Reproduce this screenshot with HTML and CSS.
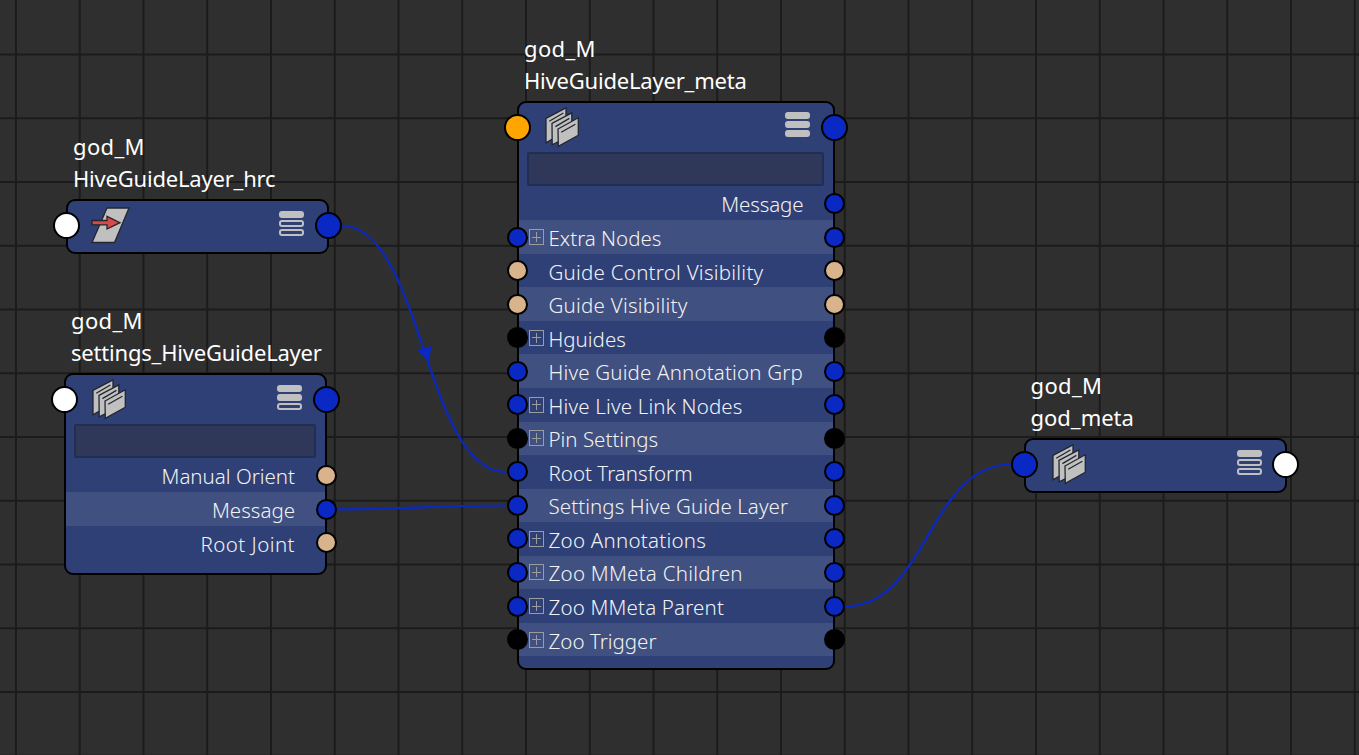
FILE: index.html
```html
<!DOCTYPE html>
<html lang="en">
<head>
<meta charset="utf-8">
<title>Node Editor</title>
<link rel="stylesheet" href="styles.css">
</head>
<body>
<svg class="defs" width="0" height="0" aria-hidden="true">
  <symbol id="stack" viewBox="0 0 35 41">
    <g fill="#c0c0c0" stroke="#23262d" stroke-width="1.3">
      <path d="M1 11.3 21 .9V24L1 35.8Z"/><path d="M4.2 14.2 18.4 6"/>
      <path d="M7 16.4 26.8 5.9V28L7.2 37.8Z"/><path d="M10.4 19.6 24.4 11.4"/>
      <path d="M13 22 33.3 10.8V28.2L13.3 39.4Z"/><path d="M16.2 25.3 30.4 17.2"/>
    </g>
  </symbol>
  <symbol id="transform" viewBox="0 0 40 37">
    <path d="M16 1H38L23.500 35.500H1Z" fill="#c0c0c0" stroke="#23262d" stroke-width="1.3"/>
    <path d="M1 13.500H16V9.300L29 15.700 16 22V17.800H1Z" fill="#d8494a" stroke="#23262d" stroke-width="1.3"/>
  </symbol>
</svg>
<main class="canvas">
  <svg class="wires" width="1359" height="755">
    <defs>
      <pattern id="grid" x="15" y="53.500" width="63.750" height="63.750" patternUnits="userSpaceOnUse">
        <path d="M1 0V63.750M0 1H63.750" stroke="#1b1b1b" stroke-width="2"/>
      </pattern>
    </defs>
    <rect width="1359" height="755" fill="url(#grid)"/>
    <g fill="none" stroke="#0a28c3" stroke-width="2.2">
      <path d="M341 225.500C423 225.500 424 472 506 472"/>
      <path d="M336 509.300C421 509.300 421 505.500 506 505.500"/>
      <path d="M845 606.300C928 606.300 928 464.500 1011 464.500"/>
    </g>
    <path d="M417.500 350.300 431.500 346 429 361.700Z" fill="#0a28c3"/>
  </svg>

  <section class="node hrc">
    <h2 class="title"><span class="ns">god_M</span><span class="name">HiveGuideLayer_hrc</span></h2>
    <div class="box">
      <header class="head">
        <i class="port big white in"></i>
        <svg class="icon-transform"><use href="#transform"/></svg>
        <div class="bars"><b class="full"></b><b></b><b></b></div>
        <i class="port big blue out"></i>
      </header>
    </div>
  </section>

  <section class="node settings">
    <h2 class="title"><span class="ns">god_M</span><span class="name">settings_HiveGuideLayer</span></h2>
    <div class="box">
      <header class="head">
        <i class="port big white in"></i>
        <svg class="icon-stack"><use href="#stack"/></svg>
        <div class="bars"><b class="full"></b><b class="full"></b><b></b></div>
        <i class="port big blue out"></i>
      </header>
      <div class="filter"></div>
      <ul class="rows">
        <li class="row right"><span class="label">Manual Orient</span><i class="port tan out"></i></li>
        <li class="row right"><span class="label">Message</span><i class="port blue out"></i></li>
        <li class="row right"><span class="label looser">Root Joint</span><i class="port tan out"></i></li>
      </ul>
    </div>
  </section>

  <section class="node meta">
    <h2 class="title"><span class="ns">god_M</span><span class="name">HiveGuideLayer_meta</span></h2>
    <div class="box">
      <header class="head">
        <i class="port big orange in"></i>
        <svg class="icon-stack"><use href="#stack"/></svg>
        <div class="bars"><b class="full"></b><b class="full"></b><b class="full"></b></div>
        <i class="port big blue out"></i>
      </header>
      <div class="filter"></div>
      <ul class="rows">
        <li class="row right"><span class="label tight">Message</span><i class="port blue out"></i></li>
        <li class="row"><i class="port blue in"></i><i class="plus"></i><span class="label">Extra Nodes</span><i class="port blue out"></i></li>
        <li class="row"><i class="port tan in"></i><span class="label loose">Guide Control Visibility</span><i class="port tan out"></i></li>
        <li class="row"><i class="port tan in"></i><span class="label loose">Guide Visibility</span><i class="port tan out"></i></li>
        <li class="row"><i class="port black in"></i><i class="plus"></i><span class="label">Hguides</span><i class="port black out"></i></li>
        <li class="row"><i class="port blue in"></i><span class="label semi">Hive Guide Annotation Grp</span><i class="port blue out"></i></li>
        <li class="row"><i class="port blue in"></i><i class="plus"></i><span class="label semi">Hive Live Link Nodes</span><i class="port blue out"></i></li>
        <li class="row"><i class="port black in"></i><i class="plus"></i><span class="label">Pin Settings</span><i class="port black out"></i></li>
        <li class="row"><i class="port blue in"></i><span class="label">Root Transform</span><i class="port blue out"></i></li>
        <li class="row"><i class="port blue in"></i><span class="label slight">Settings Hive Guide Layer</span><i class="port blue out"></i></li>
        <li class="row"><i class="port blue in"></i><i class="plus"></i><span class="label loose">Zoo Annotations</span><i class="port blue out"></i></li>
        <li class="row"><i class="port blue in"></i><i class="plus"></i><span class="label loose">Zoo MMeta Children</span><i class="port blue out"></i></li>
        <li class="row"><i class="port blue in"></i><i class="plus"></i><span class="label semi">Zoo MMeta Parent</span><i class="port blue out"></i></li>
        <li class="row"><i class="port black in"></i><i class="plus"></i><span class="label">Zoo Trigger</span><i class="port black out"></i></li>
      </ul>
    </div>
  </section>

  <section class="node root">
    <h2 class="title"><span class="ns">god_M</span><span class="name short">god_meta</span></h2>
    <div class="box">
      <header class="head">
        <i class="port big blue in"></i>
        <svg class="icon-stack"><use href="#stack"/></svg>
        <div class="bars"><b class="full"></b><b></b><b></b></div>
        <i class="port big white out"></i>
      </header>
    </div>
  </section>
</main>
</body>
</html>
```
FILE: styles.css
```css
* { box-sizing: border-box; }
body { margin: 0; background: #2f2f2f; font-family: "Noto Sans", "Open Sans", sans-serif; }
.defs { position: absolute; }
.canvas { position: relative; width: 1359px; height: 755px; overflow: hidden; }
.wires { position: absolute; inset: 0; }

/* Nodes sit freely on the canvas */
.node { position: absolute; width: 263px; }
.hrc { left: 66px; top: 130px; }
.settings { left: 64px; top: 304px; }
.meta { left: 517px; top: 32px; width: 318px; }
.root { left: 1023.5px; top: 369px; }

.title { display: flex; flex-direction: column; height: 69px; margin: 0; padding-left: 7px;
  font-size: 22px; font-weight: 400; line-height: 32px; color: #fff; white-space: nowrap; }
.ns { letter-spacing: .35px; }
.name { letter-spacing: -.2px; }
.short { letter-spacing: 0; }
.box { border: 2px solid #000; border-radius: 9px; background: #2f4077; padding-bottom: 12px; }
.settings .box { padding-bottom: 13.500px; }
.hrc .box, .root .box { height: 55px; padding: 0; }
.head { position: relative; display: flex; justify-content: space-between; height: 48.700px; padding: 4px 23.500px 0 26px; }
.root .head { padding-right: 22.500px; }
.icon-stack { width: 35px; height: 41px; }
.icon-transform { width: 40px; height: 37px; margin: 2px 0 0 -3px; }
.bars { display: flex; flex-direction: column; gap: 2px; padding-top: 6px; }
.meta .bars { padding-top: 5px; }
.bars b { width: 25px; height: 7px; border: 2px solid #c0c0c0; border-radius: 3px; }
.bars .full { background: #c0c0c0; }
.filter { height: 34px; margin: 0 9px 0 8px; border: 2px solid #202d54; border-radius: 2px; background: #2f3859; }

.rows { margin: 1px 0 0; padding: 0; list-style: none; }
.row { position: relative; display: flex; align-items: center; height: 33.550px; padding: 0 29.500px; }
.row:nth-child(even) { background: #405080; }
.right { justify-content: flex-end; }
.settings .right { padding-right: 30px; }
.label { padding-top: 2px; font-size: 20.500px; font-weight: 300; line-height: 30px; color: #f2f2f2; white-space: nowrap; }
.tight { letter-spacing: -.1px; }
.slight { letter-spacing: .07px; }
.semi { letter-spacing: .17px; }
.loose { letter-spacing: .25px; }
.looser { letter-spacing: .45px; }

/* Expander drawn in the row's left gutter */
.plus { width: 15px; height: 16px; margin: 0 4.500px 0 -19.500px; border: 1px solid #9c9c9c;
  background: linear-gradient(#9c9c9c, #9c9c9c) center / 9px 1px no-repeat, linear-gradient(#9c9c9c, #9c9c9c) center / 1px 10px no-repeat; }

/* Ports overlap the node's outline */
.port { position: absolute; top: 50%; width: 21px; height: 21px; margin-top: -10.500px; border: 2px solid #000; border-radius: 50%; }
.in { left: -12px; }
.out { right: -11.500px; }
.big { top: 24.500px; width: 27px; height: 27px; margin-top: -13.500px; }
.big.in { left: -15px; }
.big.out { right: -14.500px; }
.blue { background: #0a28c3; }
.tan { background: #d9b38c; }
.orange { background: #ffa500; }
.black { background: #000; }
.white { background: #fff; }
```
